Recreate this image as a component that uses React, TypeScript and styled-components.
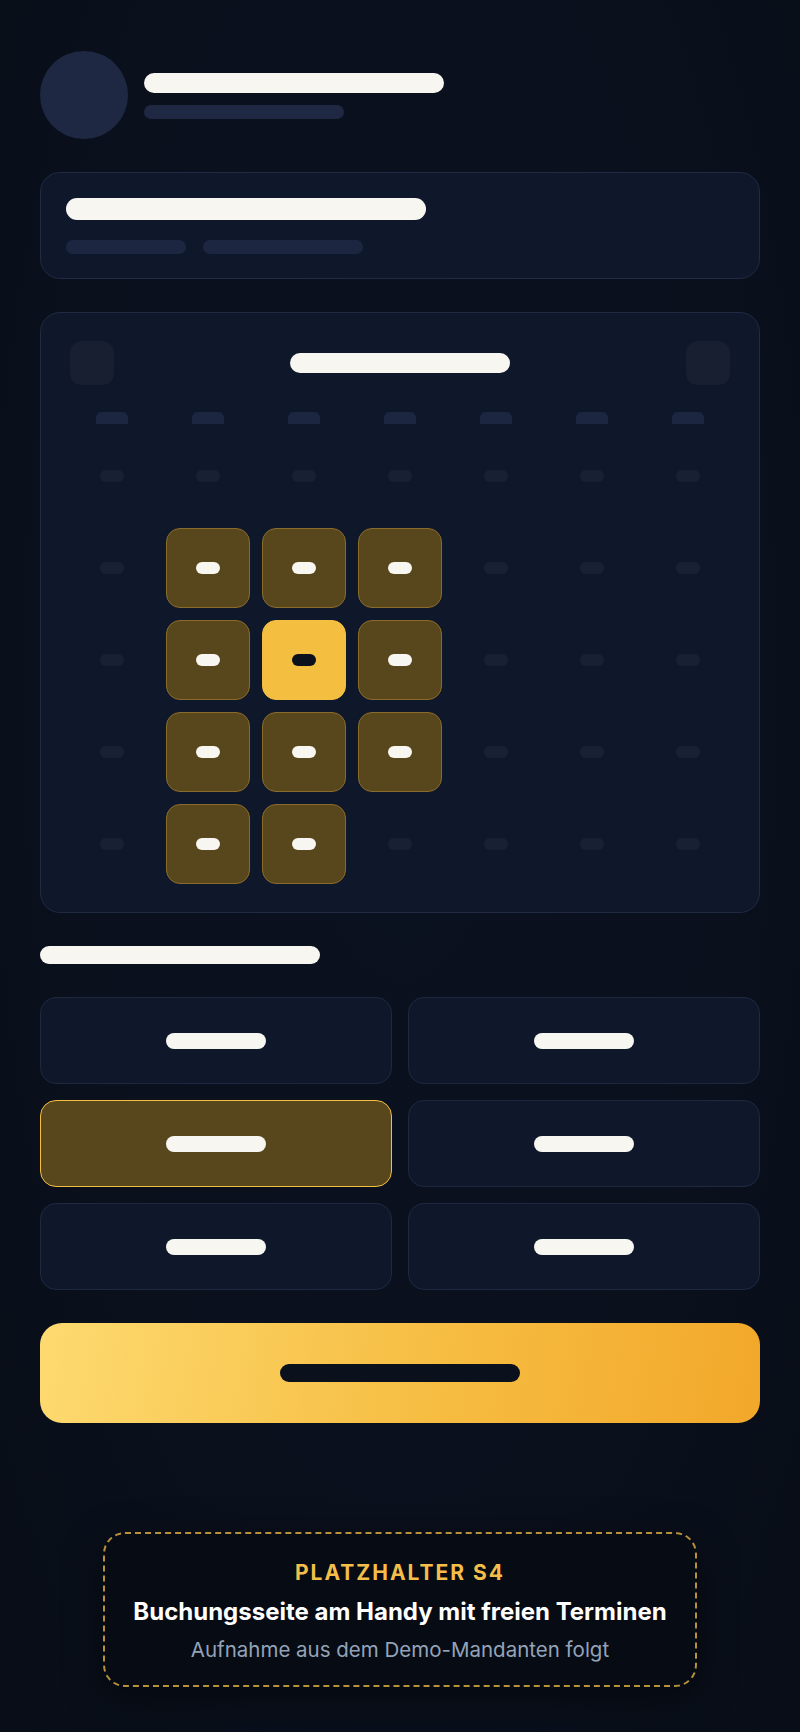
import styled, { createGlobalStyle } from 'styled-components';

const GlobalStyle = createGlobalStyle`
  * {
    box-sizing: border-box;
  }

  body {
    margin: 0;
    background: #0a101c;
    font-family: Inter, 'Noto Sans', sans-serif;
  }
`;

type DayKind = 'empty' | 'open' | 'selected';

const weeks: DayKind[][] = [
  ['empty', 'empty', 'empty', 'empty', 'empty', 'empty', 'empty'],
  ['empty', 'open', 'open', 'open', 'empty', 'empty', 'empty'],
  ['empty', 'open', 'selected', 'open', 'empty', 'empty', 'empty'],
  ['empty', 'open', 'open', 'open', 'empty', 'empty', 'empty'],
  ['empty', 'open', 'open', 'empty', 'empty', 'empty', 'empty'],
];

const slots = [false, false, true, false, false, false];

export default function App() {
  return (
    <>
      <GlobalStyle />
      <Page>
        <Header>
          <Avatar />
          <HeaderText>
            <Bar $w={300} $h={20} $color="#f8f6f1" />
            <Bar $w={200} $h={14} $color="#1e2842" />
          </HeaderText>
        </Header>

        <Card $pad="25px 25px 24px">
          <Bar $w={360} $h={22} $color="#f8f6f1" />
          <MetaRow>
            <Bar $w={120} $h={14} $color="#1c2640" />
            <Bar $w={160} $h={14} $color="#1c2640" />
          </MetaRow>
        </Card>

        <Card $pad="28px 29px">
          <CalendarHead>
            <NavButton />
            <Bar $w={220} $h={20} $color="#f8f6f1" />
            <NavButton />
          </CalendarHead>
          <DayGrid>
            {Array.from({ length: 7 }).map((_, i) => (
              <WeekdayCell key={i}>
                <Weekday />
              </WeekdayCell>
            ))}
            {weeks.flat().map((kind, i) => (
              <DayCell key={i} $kind={kind}>
                <DayDot $kind={kind} />
              </DayCell>
            ))}
          </DayGrid>
        </Card>

        <Bar $w={280} $h={18} $color="#f8f6f1" />

        <SlotGrid>
          {slots.map((active, i) => (
            <Slot key={i} $active={active}>
              <Bar $w={100} $h={16} $color="#f8f6f1" />
            </Slot>
          ))}
        </SlotGrid>

        <Cta>
          <Bar $w={240} $h={18} $color="#0a101c" />
        </Cta>

        <PlaceholderWrap>
          <Placeholder>
            <PlaceholderLabel>PLATZHALTER S4</PlaceholderLabel>
            <PlaceholderTitle>Buchungsseite am Handy mit freien Terminen</PlaceholderTitle>
            <PlaceholderNote>Aufnahme aus dem Demo-Mandanten folgt</PlaceholderNote>
          </Placeholder>
        </PlaceholderWrap>
      </Page>
    </>
  );
}

const Page = styled.main`
  width: 800px;
  min-height: 1732px;
  padding: 51px 40px 45px;
  display: flex;
  flex-direction: column;
  gap: 33px;
  background: radial-gradient(ellipse at 50% 40%, #0b1220 0%, #0a101c 60%, #080d17 100%);
`;

const Bar = styled.div<{ $w: number; $h: number; $color: string }>`
  width: ${(p) => p.$w}px;
  height: ${(p) => p.$h}px;
  border-radius: ${(p) => p.$h / 2}px;
  background: ${(p) => p.$color};
  flex-shrink: 0;
`;

const Header = styled.header`
  display: flex;
  align-items: center;
  gap: 16px;
`;

const Avatar = styled.div`
  width: 88px;
  height: 88px;
  border-radius: 50%;
  background: #1e2842;
`;

const HeaderText = styled.div`
  display: flex;
  flex-direction: column;
  gap: 12px;
  margin-top: 2px;
`;

const Card = styled.section<{ $pad: string }>`
  padding: ${(p) => p.$pad};
  background: #0f182b;
  border: 1px solid #202a42;
  border-radius: 20px;
  display: flex;
  flex-direction: column;
`;

const MetaRow = styled.div`
  display: flex;
  gap: 17px;
  margin-top: 20px;
`;

const CalendarHead = styled.div`
  display: flex;
  align-items: center;
  justify-content: space-between;
  margin-bottom: 27px;
`;

const NavButton = styled.div`
  width: 44px;
  height: 44px;
  border-radius: 12px;
  background: #181f30;
`;

const DayGrid = styled.div`
  display: grid;
  grid-template-columns: repeat(7, 1fr);
  grid-auto-rows: 80px;
  grid-template-rows: 12px;
  gap: 12px;
`;

const WeekdayCell = styled.div`
  display: flex;
  justify-content: center;
`;

const Weekday = styled.div`
  width: 32px;
  height: 12px;
  border-radius: 6px 6px 1px 1px;
  background: #1c2640;
`;

const DayCell = styled.div<{ $kind: DayKind }>`
  display: flex;
  align-items: center;
  justify-content: center;
  border-radius: 14px;
  border: 1.5px solid
    ${(p) => (p.$kind === 'open' ? '#8a6b2b' : p.$kind === 'selected' ? '#f4be40' : 'transparent')};
  background: ${(p) => (p.$kind === 'open' ? '#58471c' : p.$kind === 'selected' ? '#f4be40' : 'transparent')};
`;

const DayDot = styled.div<{ $kind: DayKind }>`
  width: 24px;
  height: 12px;
  border-radius: 6px;
  background: ${(p) => (p.$kind === 'open' ? '#f8f6f1' : p.$kind === 'selected' ? '#0a101c' : '#182133')};
`;

const SlotGrid = styled.div`
  display: grid;
  grid-template-columns: 1fr 1fr;
  gap: 16px;
`;

const Slot = styled.div<{ $active: boolean }>`
  height: 87px;
  display: flex;
  align-items: center;
  justify-content: center;
  border-radius: 16px;
  background: ${(p) => (p.$active ? '#58471c' : '#0f182b')};
  border: ${(p) => (p.$active ? '1.5px solid #f4be40' : '1.5px solid #1e2840')};
`;

const Cta = styled.div`
  height: 100px;
  border-radius: 22px;
  display: flex;
  align-items: center;
  justify-content: center;
  background: linear-gradient(100deg, #fdda70 0%, #f6bd42 55%, #f2a82a 100%);
`;

const PlaceholderWrap = styled.div`
  display: flex;
  justify-content: center;
  padding-top: 76px;
`;

const Placeholder = styled.div`
  width: 594px;
  height: 155px;
  border: 2px dashed #b8913a;
  border-radius: 22px;
  background: #070b14;
  box-shadow: 0 10px 40px rgba(0, 0, 0, 0.45);
  display: flex;
  flex-direction: column;
  align-items: center;
  padding-top: 25px;
  font-family: Inter, 'Noto Sans', sans-serif;
`;

const PlaceholderLabel = styled.div`
  color: #f4be48;
  font-size: 21px;
  font-weight: 700;
  letter-spacing: 2px;
  line-height: 28px;
`;

const PlaceholderTitle = styled.div`
  color: #ffffff;
  font-size: 24px;
  font-weight: 700;
  line-height: 34px;
  margin-top: 8px;
`;

const PlaceholderNote = styled.div`
  color: #94a3b8;
  font-size: 20.5px;
  line-height: 28px;
  margin-top: 7px;
`;
